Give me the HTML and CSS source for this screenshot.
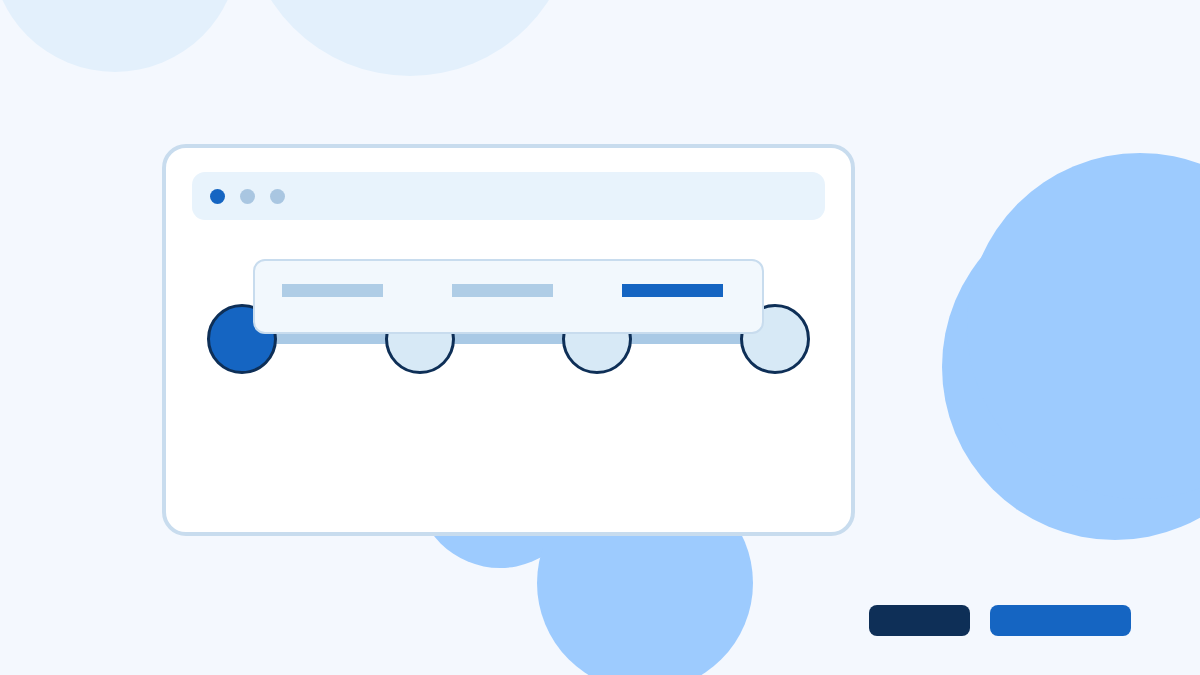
FILE: index.html
```html
<!DOCTYPE html>
<html lang="en">
<head>
    <meta charset="UTF-8">
    <meta name="viewport" content="width=device-width, initial-scale=1.0">
    <title>Onboarding Steps</title>
    <link rel="stylesheet" href="styles.css">
</head>
<body>
    <div class="scene">
        <!-- soft background bubbles -->
        <div class="bubbles">
            <span class="bubble bubble-top-left"></span>
            <span class="bubble bubble-top-mid"></span>
            <span class="bubble bubble-right-a"></span>
            <span class="bubble bubble-right-b"></span>
            <span class="bubble bubble-bottom-a"></span>
            <span class="bubble bubble-bottom-b"></span>
        </div>

        <main class="window">
            <div class="titlebar">
                <span class="dot dot-active"></span>
                <span class="dot"></span>
                <span class="dot"></span>
            </div>

            <div class="stepper">
                <div class="track"></div>
                <span class="step step-current"></span>
                <span class="step"></span>
                <span class="step"></span>
                <span class="step"></span>

                <div class="tabs">
                    <span class="tab"></span>
                    <span class="tab"></span>
                    <span class="tab tab-active"></span>
                </div>
            </div>
        </main>

        <footer class="actions">
            <button class="btn btn-dark" aria-label="Back"></button>
            <button class="btn btn-primary" aria-label="Next"></button>
        </footer>
    </div>
</body>
</html>
```

FILE: styles.css
```css
* {
    box-sizing: border-box;
}

body {
    margin: 0;
    font-family: 'Liberation Sans', Arial, sans-serif;
    background-color: #f4f8fe;
}

.scene {
    position: relative;
    width: 1200px;
    height: 675px;
    overflow: hidden;
}

/* background bubbles */
.bubbles {
    position: absolute;
    inset: 0;
    z-index: 0;
}

.bubble {
    position: absolute;
    border-radius: 50%;
    background-color: #9dcbfe;
}

.bubble-top-left {
    left: -9px;
    top: -176px;
    width: 248px;
    height: 248px;
    background-color: #e3f0fc;
}

.bubble-top-mid {
    left: 245px;
    top: -254px;
    width: 330px;
    height: 330px;
    background-color: #e3f0fc;
}

.bubble-right-a {
    left: 942px;
    top: 194px;
    width: 346px;
    height: 346px;
}

.bubble-right-b {
    left: 967px;
    top: 153px;
    width: 346px;
    height: 346px;
}

.bubble-bottom-a {
    left: 416px;
    top: 400px;
    width: 168px;
    height: 168px;
}

.bubble-bottom-b {
    left: 537px;
    top: 475px;
    width: 216px;
    height: 216px;
}

/* browser window */
.window {
    position: relative;
    z-index: 1;
    width: 693px;
    height: 392px;
    margin: 144px 0 0 162px;
    padding: 24px 26px;
    background: #fff;
    border: 4px solid #c8dcee;
    border-radius: 24px;
}

.titlebar {
    display: flex;
    align-items: center;
    gap: 15px;
    height: 48px;
    padding-left: 18px;
    background-color: #e8f3fc;
    border-radius: 13px;
}

.dot {
    width: 15px;
    height: 15px;
    border-radius: 50%;
    background-color: #a9c6e1;
}

.dot-active {
    background-color: #1565c2;
}

/* steps */
.stepper {
    position: relative;
    display: flex;
    justify-content: space-between;
    margin-top: 84px;
    padding: 0 15px;
}

.track {
    position: absolute;
    top: 30px;
    left: 50px;
    right: 50px;
    height: 10px;
    background-color: #a9c9e5;
}

.step {
    position: relative;
    width: 70px;
    height: 70px;
    border-radius: 50%;
    background-color: #d7e9f6;
    border: 3px solid #0e2f57;
}

.step-current {
    background-color: #1565c2;
}

.tabs {
    position: absolute;
    top: -45px;
    left: 61px;
    width: 511px;
    height: 75px;
    display: flex;
    align-items: flex-start;
    gap: 69px;
    padding: 23px 0 0 27px;
    background-color: #f2f8fd;
    border: 2px solid #c8dcee;
    border-radius: 12px;
}

.tab {
    width: 101px;
    height: 13px;
    background-color: #afcde6;
}

.tab-active {
    background-color: #1565c2;
}

/* footer buttons */
.actions {
    position: relative;
    z-index: 1;
    display: flex;
    justify-content: flex-end;
    gap: 20px;
    margin-top: 69px;
    padding-right: 69px;
}

.btn {
    height: 31px;
    border: none;
    border-radius: 8px;
    padding: 0;
    cursor: pointer;
}

.btn-dark {
    width: 101px;
    background-color: #0e2f57;
}

.btn-primary {
    width: 141px;
    background-color: #1565c2;
}
```
